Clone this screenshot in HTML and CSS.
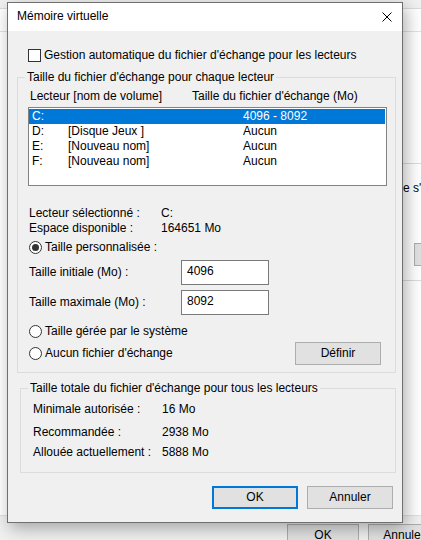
FILE: index.html
```html
<!DOCTYPE html>
<html lang="fr">
<head>
<meta charset="utf-8">
<title>Mémoire virtuelle</title>
<link rel="stylesheet" href="styles.css">
</head>
<body>
<div class="parent">
  <div class="p-tabs"><span class="p-tabs-text">Effets visuels &nbsp; Avancé &nbsp; Prévention de l'exécution des données &nbsp; Avancé</span></div>
  <div class="p-page">
    <div class="p-strip"></div>
    <div class="p-group">
      <p class="p-text">e s'il s'agissait de RAM.</p>
      <span class="p-btn"></span>
    </div>
  </div>
  <div class="p-foot">
    <span class="p-button">OK</span>
    <span class="p-button">Annuler</span>
  </div>
</div>

<div class="dialog" role="dialog" aria-label="Mémoire virtuelle">
  <div class="titlebar">
    <span class="title">Mémoire virtuelle</span>
    <svg class="close" width="10" height="10" viewBox="0 0 10 10" aria-hidden="true">
      <path d="M0.5 0.5 L9.5 9.5 M9.5 0.5 L0.5 9.5" stroke="#000" stroke-width="1" fill="none"/>
    </svg>
  </div>

  <div class="client">
    <label class="check-row">
      <span class="checkbox"></span>
      <span>Gestion automatique du fichier d'échange pour les lecteurs</span>
    </label>

    <fieldset class="group group-drives">
      <legend>Taille du fichier d'échange pour chaque lecteur</legend>

      <div class="col-heads">
        <span class="col-drive">Lecteur [nom de volume]</span>
        <span>Taille du fichier d'échange (Mo)</span>
      </div>

      <div class="listbox">
        <div class="row selected"><span>C:</span><span></span><span>4096 - 8092</span></div>
        <div class="row"><span>D:</span><span>[Disque Jeux ]</span><span>Aucun</span></div>
        <div class="row"><span>E:</span><span>[Nouveau nom]</span><span>Aucun</span></div>
        <div class="row"><span>F:</span><span>[Nouveau nom]</span><span>Aucun</span></div>
      </div>

      <div class="info">
        <span>Lecteur sélectionné :</span><span>C:</span>
        <span>Espace disponible :</span><span>164651 Mo</span>
      </div>

      <div class="radio-row radio-custom">
        <span class="radio checked"></span>
        <span>Taille personnalisée :</span>
      </div>

      <div class="size-row size-first">
        <span class="size-label">Taille initiale (Mo) :</span>
        <span class="textbox">4096</span>
      </div>
      <div class="size-row size-second">
        <span class="size-label">Taille maximale (Mo) :</span>
        <span class="textbox">8092</span>
      </div>

      <div class="radio-row radio-system">
        <span class="radio"></span>
        <span>Taille gérée par le système</span>
      </div>

      <div class="radio-row radio-none">
        <span class="radio"></span>
        <span>Aucun fichier d'échange</span>
        <span class="button btn-set">Définir</span>
      </div>
    </fieldset>

    <fieldset class="group group-total">
      <legend>Taille totale du fichier d'échange pour tous les lecteurs</legend>
      <div class="totals">
        <span class="t1">Minimale autorisée :</span><span class="t1">16 Mo</span>
        <span class="t2">Recommandée :</span><span class="t2">2938 Mo</span>
        <span class="t3">Allouée actuellement :</span><span class="t3">5888 Mo</span>
      </div>
    </fieldset>

    <div class="actions">
      <span class="button btn-default">OK</span>
      <span class="button">Annuler</span>
    </div>
  </div>
</div>
</body>
</html>
```

FILE: styles.css
```css
* {
  box-sizing: border-box;
}

html, body {
  margin: 0;
  padding: 0;
}

body {
  width: 421px;
  height: 540px;
  overflow: hidden;
  position: relative;
  background: #f0f0f0;
  font-family: "Liberation Sans", Arial, sans-serif;
  font-size: 12px;
  line-height: 15px;
  color: #000;
}

/* ---- parent window behind the dialog ---- */
.parent {
  display: flex;
  flex-direction: column;
  height: 540px;
}

.p-tabs {
  height: 9px;
  overflow: hidden;
  background: #f0f0f0;
  border-bottom: 1px solid #dadada;
}

.p-tabs-text {
  display: block;
  margin-top: -13px;
  white-space: nowrap;
}

.p-page {
  flex: 1;
  background: #ffffff;
}

.p-strip {
  height: 23px;
  border-bottom: 1px solid #e2e2e2;
}

.p-group {
  margin: 131px 0 0 250px;
  width: 220px;
  height: 118px;
  border: 1px solid #dcdcdc;
  padding: 17px 0 0 152px;
}

.p-text {
  margin: 0;
  white-space: nowrap;
}

.p-btn {
  display: block;
  margin: 47px 0 0 11px;
  width: 80px;
  height: 23px;
  background: #e1e1e1;
  border: 1px solid #adadad;
}

.p-foot {
  height: 25px;
  border-top: 1px solid #dfdfdf;
  background: #f0f0f0;
  display: flex;
  gap: 9px;
  padding: 8px 0 0 287px;
}

.p-button {
  flex: none;
  width: 72px;
  height: 23px;
  background: #e1e1e1;
  border: 1px solid #adadad;
  text-align: center;
  line-height: 21px;
}

/* ---- dialog window ---- */
.dialog {
  position: absolute;
  left: 7px;
  top: 2px;
  width: 396px;
  height: 521px;
  border: 1px solid #6f6f6f;
  background: #f0f0f0;
  box-shadow: 3px 5px 16px rgba(0, 0, 0, 0.32);
  display: flex;
  flex-direction: column;
}

.titlebar {
  height: 28px;
  background: #ffffff;
  display: flex;
  align-items: center;
  justify-content: space-between;
  padding: 0 10px 2px 9px;
}

.title {
  line-height: 15px;
}

.close {
  display: block;
  margin-top: 1px;
}

.client {
  flex: 1;
  display: flex;
  flex-direction: column;
}

.check-row {
  display: flex;
  align-items: center;
  gap: 3px;
  height: 13px;
  margin: 18px 0 0 20px;
}

.checkbox {
  width: 13px;
  height: 13px;
  border: 1px solid #333333;
  background: #ffffff;
}

/* group boxes */
.group {
  margin: 7px 6px 0 9px;
  border: 1px solid #dcdcdc;
  padding: 0 0 7px 0;
  min-width: 0;
}

.group legend {
  margin-left: 7px;
  padding: 0 2px;
  line-height: 16px;
}

.col-heads {
  display: flex;
  margin-top: 4px;
  padding-left: 12px;
}

.col-drive {
  width: 162px;
}

.listbox {
  margin: 3px 0 0 10px;
  width: 359px;
  height: 79px;
  border: 1px solid #828282;
  background: #ffffff;
  padding: 1px 1px 0 0;
}

.row {
  display: grid;
  grid-template-columns: 36px 175px auto;
  height: 15px;
  padding-left: 3px;
  white-space: nowrap;
}

.row.selected {
  background: #0078d7;
  color: #ffffff;
}

.info {
  display: grid;
  grid-template-columns: 132px auto;
  margin-top: 20px;
  padding-left: 11px;
}

.radio-row {
  display: flex;
  align-items: center;
  gap: 3px;
  padding-left: 11px;
}

.radio {
  flex: none;
  width: 13px;
  height: 13px;
  border: 1px solid #333333;
  border-radius: 50%;
  background: #ffffff;
  display: flex;
  align-items: center;
  justify-content: center;
}

.radio.checked::after {
  content: "";
  width: 7px;
  height: 7px;
  border-radius: 50%;
  background: #333333;
}

.radio-custom {
  margin-top: 5px;
  height: 13px;
}

.size-row {
  display: flex;
  align-items: center;
  height: 25px;
  padding-left: 11px;
}

.size-first {
  margin-top: 6px;
}

.size-second {
  margin-top: 5px;
}

.size-label {
  width: 152px;
}

.textbox {
  width: 88px;
  height: 25px;
  border: 1px solid #7a7a7a;
  background: #ffffff;
  padding: 3px 0 0 5px;
}

.radio-system {
  margin-top: 10px;
  height: 13px;
}

.radio-none {
  margin-top: 4px;
  height: 23px;
  padding-right: 14px;
}

.button {
  flex: none;
  width: 86px;
  height: 23px;
  background: #e1e1e1;
  border: 1px solid #adadad;
  text-align: center;
  line-height: 21px;
}

.btn-set {
  margin-left: auto;
}

.group-total {
  margin-left: 12px;
  padding-bottom: 12px;
}

.totals {
  display: grid;
  grid-template-columns: 129px auto;
  padding-left: 12px;
}

.t1 {
  margin-top: 6px;
}

.t2 {
  margin-top: 8px;
}

.t3 {
  margin-top: 5px;
}

.actions {
  display: flex;
  justify-content: flex-end;
  gap: 9px;
  margin-top: 13px;
  padding-right: 9px;
}

.btn-default {
  border: 2px solid #0078d7;
  line-height: 19px;
}
```
